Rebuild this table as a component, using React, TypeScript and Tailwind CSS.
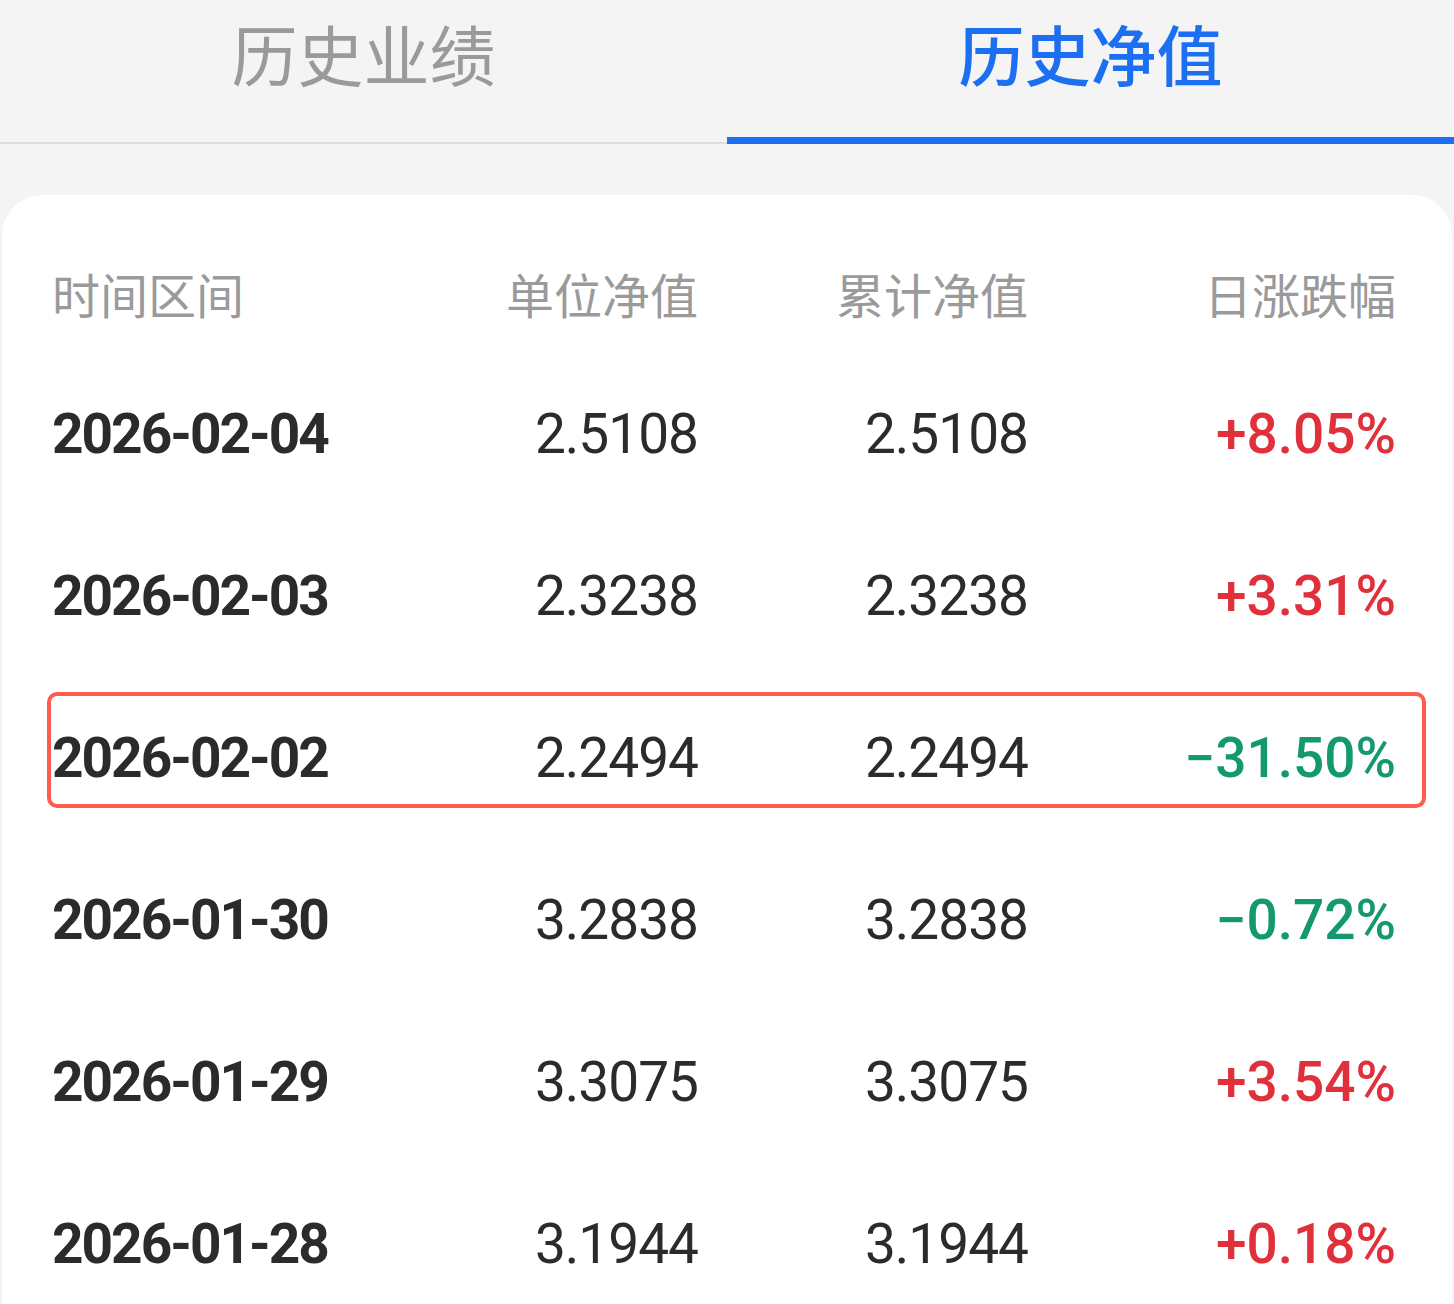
const rows = [
  { date: "2026-02-04", unit: "2.5108", total: "2.5108", change: "+8.05%", up: true },
  { date: "2026-02-03", unit: "2.3238", total: "2.3238", change: "+3.31%", up: true },
  { date: "2026-02-02", unit: "2.2494", total: "2.2494", change: "−31.50%", up: false, marked: true },
  { date: "2026-01-30", unit: "3.2838", total: "3.2838", change: "−0.72%", up: false },
  { date: "2026-01-29", unit: "3.3075", total: "3.3075", change: "+3.54%", up: true },
  { date: "2026-01-28", unit: "3.1944", total: "3.1944", change: "+0.18%", up: true },
];

const cjk = "font-['Noto_Sans_CJK_SC','Noto_Sans',sans-serif]";
const num = "font-['Roboto','Noto_Sans',sans-serif]";

export default function App() {
  return (
    <div className={`w-[1454px] h-[1304px] bg-[#f4f4f4] overflow-hidden flex flex-col ${cjk}`}>
      {/* tabs */}
      <div className="flex h-[144px] shrink-0">
        <div className="flex-1 flex justify-center pt-[19px] border-b-2 border-[#dedede]">
          <span className="text-[66px] leading-[66px] text-[#9a9a9a]">历史业绩</span>
        </div>
        <div className="flex-1 flex justify-center pt-[19px] border-b-[7px] border-[#1d6ff2]">
          <span className="text-[66px] leading-[66px] font-medium text-[#1d6ff2]">历史净值</span>
        </div>
      </div>

      {/* table card */}
      <div className="mt-[51px] mx-[2px] flex-1 bg-white rounded-t-[40px] pt-[38px] pl-[50px]">
        <div className="grid grid-cols-[346px_300px_330px_368px] h-[120px] items-center text-[48px] leading-none text-[#9a9a9a]">
          <div>时间区间</div>
          <div className="text-right">单位净值</div>
          <div className="text-right">累计净值</div>
          <div className="text-right">日涨跌幅</div>
        </div>

        {rows.map((r) => (
          <div key={r.date} className="relative h-[162px]">
            <div className={`grid grid-cols-[346px_300px_330px_368px] h-full items-center text-[55px] leading-none whitespace-nowrap text-[#2b2b2b] ${num}`}>
              <div className="font-bold tracking-[-2px]">{r.date}</div>
              <div className="text-right tracking-[-1px]">{r.unit}</div>
              <div className="text-right tracking-[-1px]">{r.total}</div>
              <div className={`text-right font-medium ${r.up ? "text-[#e0303b]" : "text-[#13986f]"}`}>{r.change}</div>
            </div>
            {r.marked && (
              <div className="absolute left-[-5px] w-[1379px] top-[15px] h-[116px] border-[4px] border-[#ff5b50] rounded-[10px]" />
            )}
          </div>
        ))}
      </div>
    </div>
  );
}
